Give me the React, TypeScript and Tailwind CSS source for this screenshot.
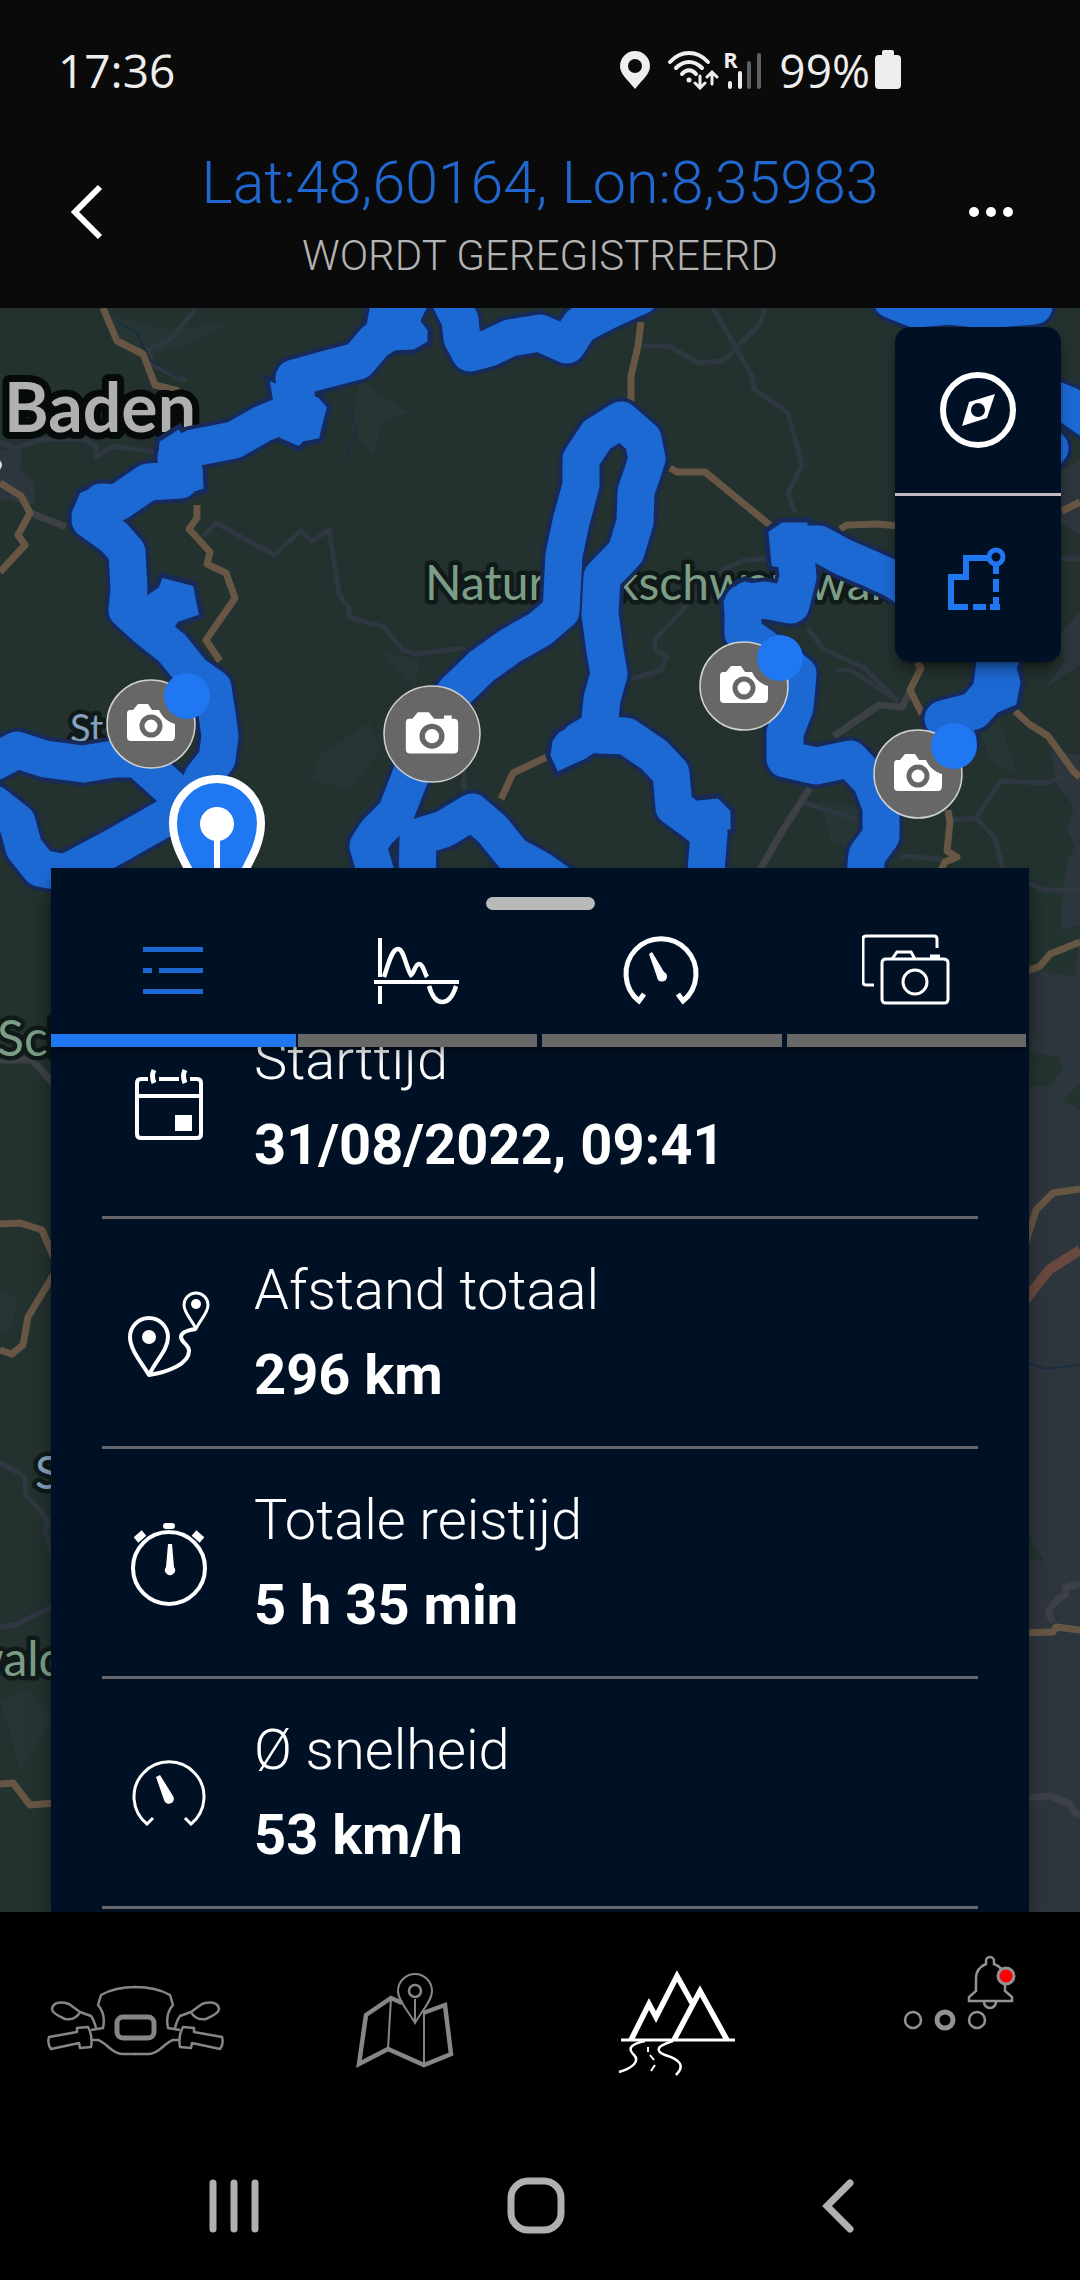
import type { ReactNode } from "react";

const trackLines = [
  "M410 300L396 328L375 341L358 361L331 368L294 378L298 409L262 424L234 440L193 448L176 457L180 480L148 482L117 503L102 502L90 520L114 537L127 552L129 589L127 610L148 629L172 648L193 674L213 688L217 714L220 736L217 759L203 777L193 799L165 818L114 847L65 873L40 868L24 848L17 822L-6 804",
  "M-6 762L17 750L45 759L83 764L114 759L138 759L158 777L179 796",
  "M450 300L460 320L462 338L470 353L489 348L510 338L540 333L567 345L580 325L605 312L640 296",
  "M382 890L375 870L368 846L377 832L396 813L410 777L424 740L455 692L482 666L510 646L540 629L561 611L562 592L564 555L571 522L581 485L581 459L597 435L621 420L643 439L647 459L636 492L635 522L626 552L602 577L600 614L605 651L609 674L602 699L599 729L580 740",
  "M599 735L626 736L654 755L671 773L674 807L692 820L709 833L705 885",
  "M417 885L418 837L444 829L472 812L492 829L513 855L540 870L560 884",
  "M930 604L895 580L871 569L843 557L819 544L795 544L798 577L791 605L764 600L743 603L743 633L774 655L798 674L795 707L785 733L785 759L816 766L850 759L871 781L881 807L881 836L867 855L864 885",
  "M998 640L991 692L974 711L943 719L958 740",
  "M892 300L915 309L950 306L985 310L1034 306",
  "M1056 400L1068 405L1090 420M1050 448L1048 450",
];

const trackPatches = [
  "M273 385L317 400L324 408L317 436L302 439L298 443L282 436Z",
  "M164 581L191 588L196 613L176 620L168 634L140 618L148 598L161 589Z",
  "M374 300L422 300L418 322L425 331L425 340L413 347L389 348L367 335Z",
  "M717 801L728 812L728 827L700 830L690 804Z",
  "M771 533L783 525L805 525L806 570L774 564Z",
  "M740 586L745 584L780 592L784 574L795 610L728 620L726 602Z",
  "M978 652L1020 655L1014 668L1018 682L1014 703L985 715Z",
  "M588 720L560 735L555 742L553 755L559 768L585 756Z",
  "M162 443L178 433L200 468L201 487L176 494L158 482Z",
  "M74 514L82 495L100 487L114 500L96 530L78 526Z",
];

const mainRoads = [
  "M103 308L117 341L143 354L155 385L179 391",
  "M0 483L21 496L30 513L18 535L25 545L0 572",
  "M197 505L197 518L189 529L210 552L207 564L226 573L235 598L206 640L220 661",
  "M547 757L513 773L501 799",
  "M641 322L638 346L631 376L631 404",
  "M670 468L677 472L705 472L771 526",
  "M840 529L847 525L878 524L898 526",
  "M917 662L921 668L910 690L922 714",
  "M1015 711L1029 724L1048 736L1074 772L1080 777",
  "M948 810L950 822L947 851L957 857L945 862L941 870",
  "M1062 511L1080 502",
  "M1020 974L1040 966L1050 954L1080 942",
  "M1026 1242L1036 1210L1053 1193L1080 1189",
  "M1020 1633L1053 1632L1056 1627L1080 1630",
  "M0 1224L20 1223L42 1230L54 1258M54 1274L28 1317L23 1345L12 1354L0 1350",
  "M0 1784L13 1783L30 1805L55 1803",
];

const smallRoads = [
  "M196 308L170 340L148 350L153 365L186 381",
  "M203 537L216 523L274 555L301 531L312 541L329 530L339 594L350 609L348 617L384 627L403 650L415 654L465 648",
  "M0 442L14 448L45 439L83 439L96 446L96 457L114 446L155 452",
  "M713 308L736 348L752 376L754 389L788 413L802 465L788 493L795 513",
  "M643 346L669 346L698 363L723 361L760 324L765 308",
  "M766 559L745 560L726 568L685 607L655 640L655 650L667 656L661 670L628 680",
  "M807 627L822 648L864 668L898 701M836 670L850 670L898 701",
  "M805 803L857 820",
  "M953 820L976 818L1001 781L1048 783L1080 770M976 818L995 838L1003 868",
  "M900 856L943 859",
  "M1062 559L1080 559",
  "M464 750L464 790",
  "M0 1462L25 1477L26 1495L48 1520L45 1533L55 1560",
  "M0 1627L15 1625L55 1605",
  "M1020 880L1045 890L1080 890",
];

const wideGreyRoads = [
  "M31 513L66 527",
  "M834 736L879 705L902 707L910 692",
  "M810 788L781 833L760 870",
  "M0 1060L32 1060L54 1084",
  "M1080 1584L1065 1588L1066 1594L1057 1600L1048 1612L1053 1622",
  "M1020 1798L1050 1796L1070 1804L1075 1813L1080 1815",
];

const builtUp = [
  "M1080 460L1062 470L1055 520L1080 535Z",
  "M1080 611L1057 637L1065 661L1045 688L1080 665Z",
  "M1080 755L1050 751L1057 785L1074 807L1067 829L1075 847L1062 870L1020 890L1020 1912L1080 1912Z",
  "M0 450L22 448L20 470L34 482L34 505L0 500Z",
];

const forest = [
  "M1020 880L1040 866L1068 862L1061 905L1061 930L1080 925L1075 978L1045 970L1020 960Z",
  "M1020 1050L1060 1057L1062 1070L1050 1086L1020 1086Z",
  "M1062 1100L1080 1084L1080 1110Z",
  "M1020 1520L1035 1545L1045 1562L1020 1555Z",
];

const hills = [
  "M110 315L170 330L230 322L190 345L130 360Z",
  "M360 380L410 413L384 420L372 455L350 430Z",
  "M383 652L420 660L415 690L395 670Z",
  "M320 755L370 722L380 750L350 790L312 780Z",
  "M820 800L870 810L850 850L830 840Z",
  "M920 590L890 600L860 590L900 570Z",
  "M970 700L1000 720L1020 780L990 760Z",
  "M0 1290L18 1300L12 1330L0 1332Z",
  "M0 1700L30 1690L50 1720L20 1770Z",
];

type MarkerProps = { x: number; y: number; large?: boolean };

function PhotoMarker({ x, y, large = false }: MarkerProps) {
  return (
    <g transform={`translate(${x} ${y})`}>
      <circle r={large ? 48 : 44} fill="#676767" stroke="#d0d0d0" strokeWidth="1.5" />
      <g transform={large ? "scale(1.09)" : undefined}>
        <path
          d={
            large
              ? "M-21 -14H-18L-13 -20H-3L2 -14H11V-17H18V-14H20Q24 -14 24 -10V14Q24 18 20 18H-20Q-24 18 -24 14V-10Q-24 -14 -21 -14Z"
              : "M-21 -14H-18L-13 -20H-3L1 -14H8C11 -7 17 -2 24 0V12Q24 17 20 17H-20Q-24 17 -24 13V-10Q-24 -14 -21 -14Z"
          }
          fill="#fff"
        />
        <circle cy="2" r="9" fill="#fff" stroke="#676767" strokeWidth="5" />
      </g>
      {!large && <circle cx="36" cy="-28" r="23" fill="#1f78f2" />}
    </g>
  );
}

function MapCanvas() {
  return (
    <svg
      className="absolute inset-0 h-full w-full"
      viewBox="0 308 1080 1604"
      preserveAspectRatio="xMidYMin slice"
      role="img"
      aria-label="Kaart met opgenomen route"
    >
      <rect y="308" width="1080" height="1604" fill="#23312f" />
      <g fill="#263634">{hills.map((d) => <path key={d} d={d} />)}</g>
      <g fill="#2e363d">{builtUp.map((d) => <path key={d} d={d} />)}</g>
      <g fill="#233330">{forest.map((d) => <path key={d} d={d} />)}</g>
      <g fill="none" strokeLinejoin="round">
        <g stroke="#2f3740" strokeWidth="5">{smallRoads.map((d) => <path key={d} d={d} />)}</g>
        <g stroke="#3d4046" strokeWidth="7">{wideGreyRoads.map((d) => <path key={d} d={d} />)}</g>
        <path d="M115 320L136 332L150 360L180 378M343 395L357 430L345 460M1020 1360L1045 1369L1080 1365" stroke="#1d2d42" strokeWidth="2" />
        <g stroke="#665643" strokeWidth="7">{mainRoads.map((d) => <path key={d} d={d} />)}</g>
        <path d="M1022 1304L1050 1269L1080 1250" stroke="#69493f" strokeWidth="10" />
      </g>
      <g
        fontFamily='Lato, "Noto Sans", sans-serif'
        paintOrder="stroke"
        strokeLinejoin="round"
        stroke="#101a19"
        strokeWidth="9"
      >
        <text x="4" y="432" fontSize="68" fontWeight="700" fill="#b0b0b0" stroke="#060a0a" strokeWidth="14">Baden</text>
        <text x="425" y="600" fontSize="48" fill="#7b9d86">Naturparkschwarzwald</text>
        <text x="70" y="742" fontSize="38" fill="#86a0bd">St</text>
        <text x="-3" y="1056" fontSize="50" fill="#7b9d86">Sch</text>
        <text x="35" y="1489" fontSize="46" fill="#86a0bd">S</text>
        <text x="-34" y="1676" fontSize="48" fill="#7b9d86">wald</text>
      </g>
      <circle cx="-4" cy="465" r="6" fill="#ddd" />
      <g strokeLinejoin="round" fill="#172a5c" stroke="#172a5c">
        {trackLines.map((d) => <path key={d} d={d} fill="none" strokeWidth="45" strokeLinecap="round" />)}
        {trackPatches.map((d) => <path key={d} d={d} strokeWidth="15" strokeLinejoin="miter" />)}
      </g>
      <g strokeLinejoin="round" fill="#1c69d4" stroke="#1c69d4">
        {trackLines.map((d) => <path key={d} d={d} fill="none" strokeWidth="37" strokeLinecap="round" />)}
        {trackPatches.map((d) => <path key={d} d={d} strokeWidth="5" strokeLinejoin="miter" />)}
      </g>
      <PhotoMarker x={151} y={724} />
      <PhotoMarker x={432} y={734} large />
      <PhotoMarker x={744} y={686} />
      <PhotoMarker x={918} y={774} />
      <path d="M217 779A44 44 0 0 1 261 823C261 850 245 866 217 925C189 866 173 850 173 823A44 44 0 0 1 217 779Z" fill="#1f78f2" stroke="#fff" strokeWidth="8" />
      <circle cx="217" cy="824" r="17" fill="#fff" />
      <path d="M217 824V920" stroke="#fff" strokeWidth="6" />
    </svg>
  );
}

function StatusBar() {
  return (
    <div className="flex h-[116px] items-center justify-between pt-6 pr-[178px] pl-[58px] font-['Open_Sans',sans-serif] text-[#eeeeee]">
      <span className="text-[46px] leading-[56px]">17:36</span>
      <div className="flex items-center">
        <svg width="32" height="40" viewBox="0 0 32 40" fill="currentColor" aria-hidden="true">
          <path fillRule="evenodd" d="M16 1A15 15 0 0 1 31 16C31 24 24 29 16 39C8 29 1 24 1 16A15 15 0 0 1 16 1ZM16 9A7 7 0 1 0 16 23A7 7 0 1 0 16 9Z" />
        </svg>
        <svg className="ml-4" width="52" height="40" viewBox="0 0 52 40" fill="none" stroke="currentColor" strokeWidth="4" strokeLinecap="round" aria-hidden="true">
          <path d="M3 12C14 0 30 0 41 12M9 18C17 10 27 10 35 18M15 24C19 19 25 19 29 24" />
          <circle cx="22" cy="30" r="2.5" fill="currentColor" stroke="none" />
          <path strokeWidth="3" d="M33 26V37M28 33L33 38L38 33M45 34V23M40 27L45 22L50 27" />
        </svg>
        <div className="relative ml-1 h-10 w-10">
          <span className="absolute top-0 left-0 text-[22px] leading-[18px] font-bold">R</span>
          <svg width="40" height="40" viewBox="0 0 40 40" fill="none" stroke="currentColor" strokeWidth="4" strokeLinecap="round" aria-hidden="true">
            <path d="M7 33V37M17 23V37" />
            <path stroke="#606060" d="M26 13V37M36 5V37" />
          </svg>
        </div>
        <span className="ml-4 text-[46px] leading-[56px]">99%</span>
        <svg className="ml-1" width="28" height="40" viewBox="0 0 28 40" fill="currentColor" aria-hidden="true">
          <path d="M8 2Q8 0 10 0H18Q20 0 20 2V5H23Q27 5 27 9V35Q27 39 23 39H5Q1 39 1 35V9Q1 5 5 5H8Z" />
        </svg>
      </div>
    </div>
  );
}

function TitleBar() {
  return (
    <header className="flex h-[192px] items-center justify-between px-9">
      <button type="button" aria-label="Terug" className="flex h-[102px] w-[102px] items-center justify-center">
        <svg width="40" height="60" viewBox="0 0 40 60" fill="none" stroke="#fff" strokeWidth="6" aria-hidden="true">
          <path d="M33 5L8 30L33 55" />
        </svg>
      </button>
      <div className="flex flex-col items-center gap-[10px]">
        <h1 className="text-[59px] leading-[78px] font-light text-[#2067cf]">Lat:48,60164, Lon:8,35983</h1>
        <p className="text-[42px] leading-[48px] font-light text-[#b4b4b4]">WORDT GEREGISTREERD</p>
      </div>
      <button type="button" aria-label="Meer opties" className="flex h-[102px] w-[102px] items-center justify-center">
        <svg width="50" height="20" viewBox="0 0 50 20" fill="#fff" aria-hidden="true">
          <circle cx="6" cy="10" r="5" />
          <circle cx="23" cy="10" r="5" />
          <circle cx="40" cy="10" r="5" />
        </svg>
      </button>
    </header>
  );
}

function MapControls() {
  return (
    <div className="absolute top-[19px] right-[19px] flex w-[166px] flex-col overflow-hidden rounded-[15px] bg-[#001126] shadow-lg shadow-black/40">
      <button type="button" aria-label="Kompas" className="flex h-[166px] items-center justify-center">
        <svg width="80" height="80" viewBox="0 0 80 80" aria-hidden="true">
          <circle cx="40" cy="40" r="35" fill="none" stroke="#fff" strokeWidth="6" />
          <path fillRule="evenodd" fill="#fff" d="M57 24L31 32L24 56L49 48ZM40 33A7 7 0 1 1 40 47A7 7 0 1 1 40 33Z" />
        </svg>
      </button>
      <button type="button" aria-label="Route tonen" className="flex h-[169px] items-center justify-center border-t-3 border-[#bebbc3]">
        <svg width="80" height="80" viewBox="0 0 80 80" fill="none" stroke="#1f78f2" strokeWidth="6" aria-hidden="true">
          <path d="M51 19H28V38H13V68H30M35 68H48M52 68H62M58 71V58M58 53V40M58 35V25" />
          <circle cx="58" cy="18" r="7" strokeWidth="5" />
        </svg>
      </button>
    </div>
  );
}

const tabs: { label: string; icon: ReactNode }[] = [
  {
    label: "Overzicht",
    icon: <path fill="#1c69d4" d="M15 17H75V22H15ZM15 38H24V43H15ZM31 38H75V43H31ZM15 59H75V64H15Z" />,
  },
  {
    label: "Hoogteprofiel",
    icon: (
      <g fill="none" stroke="#fff" strokeWidth="4.5">
        <path strokeWidth="4" d="M7 8V47M7 56V74M1 52H86" />
        <path d="M11 47C16 32 19 19 25 19C31 19 33 38 38 45C41 44 42 34 46 34C50 34 51 42 54 47M56 56C59 66 63 72 69 72C76 72 80 66 83 56" />
      </g>
    ),
  },
  {
    label: "Snelheid",
    icon: (
      <g fill="none" stroke="#fff" strokeWidth="5">
        <path d="M27 64L22 71A35 35 0 1 1 66 71L61 64" />
        <path fill="#fff" stroke="none" d="M32 24L35 22L47 42A5 5 0 1 1 40 47Z" />
      </g>
    ),
  },
  {
    label: "Foto's",
    icon: (
      <g fill="none" stroke="#fff" strokeWidth="3">
        <path d="M75 18V9Q75 6 72 6H4Q1 6 1 9V52Q1 55 4 55H12" />
        <path d="M24 29H81Q86 29 86 33V69Q86 73 82 73H24Q20 73 20 69V33Q20 29 24 29ZM30 29L35 22H49L53 29M68 26H78" />
        <circle cx="53" cy="52" r="12" />
      </g>
    ),
  },
];

const stats: { label: string; value: string; icon: ReactNode }[] = [
  {
    label: "Starttijd",
    value: "31/08/2022, 09:41",
    icon: (
      <g fill="none" stroke="#fff" strokeWidth="4">
        <path d="M24 21H17Q13 21 13 25V76Q13 80 17 80H73Q77 80 77 76V25Q77 21 73 21H66M35 21H55M13 38H77" />
        <path strokeWidth="5" d="M30 12Q27 18 30 25M61 12Q58 18 61 25" />
        <path fill="#fff" stroke="none" d="M51 57H68V73H51Z" />
      </g>
    ),
  },
  {
    label: "Afstand totaal",
    value: "296 km",
    icon: (
      <g fill="none" stroke="#fff" strokeWidth="4" strokeLinejoin="round">
        <path d="M25 87C18 75 6 62 6 49A19 19 0 0 1 44 49C44 62 32 72 25 87C44 84 65 76 65 63C65 56 57 55 57 49C57 44 64 42 72 41" />
        <path strokeWidth="3" d="M72 41C68 32 60 25 60 17A12 12 0 0 1 84 17C84 25 76 32 72 41Z" />
        <circle cx="25" cy="49" r="7" fill="#fff" stroke="none" />
        <circle cx="72" cy="16" r="5" fill="#fff" stroke="none" />
      </g>
    ),
  },
  {
    label: "Totale reistijd",
    value: "5 h 35 min",
    icon: (
      <g fill="none" stroke="#fff" strokeWidth="4">
        <circle cx="45" cy="50" r="36" />
        <path strokeWidth="6" strokeLinecap="round" d="M42 8H48" />
        <path strokeWidth="7" d="M12 22L20 15M70 15L78 22" />
        <path fill="#fff" stroke="none" d="M44 26H48L50 49A5 5 0 1 1 42 49Z" />
      </g>
    ),
  },
  {
    label: "Ø snelheid",
    value: "53 km/h",
    icon: (
      <g fill="none" stroke="#fff" strokeWidth="3">
        <path d="M29 70L23 76A35 35 0 1 1 67 76L61 70" />
        <path fill="#fff" stroke="none" d="M32 29L36 27L49 48A5 5 0 1 1 40 52Z" />
      </g>
    ),
  },
];

function DetailsPanel() {
  return (
    <section className="relative mx-[51px] mt-[560px] bg-[#001126] shadow-xl shadow-black/40">
      <div className="relative z-10 bg-[#001126] pt-[29px] shadow-lg shadow-black/30">
        <div className="mx-auto h-[13px] w-[109px] rounded-full bg-[#b9b9b9]" />
        <div role="tablist" className="grid grid-cols-4">
          {tabs.map((tab, index) => (
            <button key={tab.label} type="button" role="tab" aria-label={tab.label} aria-selected={index === 0} className="flex flex-col items-center gap-6 pt-5">
              <svg width="90" height="80" viewBox="0 0 90 80" aria-hidden="true">{tab.icon}</svg>
              <span className={index === 0 ? "h-[13px] self-stretch bg-[#1f78f2]" : "mr-[3px] ml-[2px] h-[13px] self-stretch bg-[#676767]"} />
            </button>
          ))}
        </div>
      </div>
      <div className="overflow-hidden px-[51px] pb-[3px]">
        <dl className="-mt-[58px]">
          {stats.map((stat) => (
            <div key={stat.label} className="flex items-center gap-10 border-b-3 border-[#65676c] py-[38px] pl-[22px]">
              <svg className="shrink-0" width="90" height="90" viewBox="0 0 90 90" aria-hidden="true">{stat.icon}</svg>
              <div className="flex flex-col gap-[19px] text-[56px] leading-[66px] text-white">
                <dt className="font-light">{stat.label}</dt>
                <dd className="font-bold">{stat.value}</dd>
              </div>
            </div>
          ))}
        </dl>
      </div>
    </section>
  );
}

const handlebarSide = (
  <>
    <path d="M32 76L43 75Q48 84 46 95L35 96L34 91L6 97Q2 92 4 85L32 80Z" />
    <path d="M7 57C8 49 18 50 24 52L35 60C32 66 26 68 20 67C13 64 7 61 7 57ZM35 60L46 64Q49 68 51 76" />
    <path d="M46 78L58 76Q61 62 53 53L56 43Q70 35 91 35M46 88H53C62 91 67 102 77 102H91" />
  </>
);

const destinations: { label: string; icon: ReactNode }[] = [
  {
    label: "Motor",
    icon: (
      <g fill="none" stroke="#868686" strokeWidth="2.5" strokeLinejoin="round">
        {handlebarSide}
        <g transform="translate(181 0) scale(-1 1)">{handlebarSide}</g>
        <rect x="72" y="65" width="37" height="21" rx="6" strokeWidth="5" />
      </g>
    ),
  },
  {
    label: "Navigatie",
    icon: (
      <g fill="none" stroke="#868686" strokeWidth="4.5">
        <path d="M87 51L76 46L51 63L44 112L73 97L109 113L136 102L130 53L108 61" />
        <path strokeWidth="2" d="M76 46L73 97M109 61V113M100 47V70" />
        <path strokeWidth="2" d="M100 71C94 60 83 49 83 39A17 17 0 0 1 117 39C117 49 106 60 100 71Z" />
        <circle cx="100" cy="39" r="6" strokeWidth="2.5" />
      </g>
    ),
  },
  {
    label: "Routes",
    icon: (
      <g fill="none" stroke="#fff" strokeWidth="5.5">
        <path d="M46 88L64 52L71 65L92 24L107 51M89 88L115 39L142 88" />
        <path strokeWidth="3" d="M36 88H150" />
        <path strokeWidth="2.5" d="M60 89C42 93 44 98 49 103C55 109 48 116 34 120M88 89C71 94 70 99 80 103C96 108 100 114 91 123" />
        <path strokeWidth="2" d="M63 95V100M65 103L69 108M70 113L66 119" />
      </g>
    ),
  },
  {
    label: "Meer",
    icon: (
      <g fill="none" stroke="#929292" strokeWidth="2.5">
        <circle cx="58" cy="68" r="8" />
        <circle cx="90" cy="68" r="8" strokeWidth="5" />
        <circle cx="122" cy="68" r="8" />
        <path d="M131 12V9A4 4 0 0 1 139 9V12C147 15 150 20 150 26V39L157 45V49H114V45L121 39V26C121 20 124 15 131 12ZM129 50A6 6 0 0 0 141 50" />
        <circle cx="151" cy="24" r="8" fill="#f00" strokeWidth="3" />
      </g>
    ),
  },
];

function BottomNavigation() {
  return (
    <nav className="grid h-[220px] grid-cols-4 items-center bg-black">
      {destinations.map((item) => (
        <a key={item.label} href="#" aria-label={item.label} className="flex justify-center">
          <svg width="180" height="140" viewBox="0 0 180 140" aria-hidden="true">{item.icon}</svg>
        </a>
      ))}
    </nav>
  );
}

function SystemNavigation() {
  return (
    <div className="grid h-[148px] grid-cols-3 items-center bg-black pr-[93px] pl-[84px]">
      <button type="button" aria-label="Recente apps" className="flex justify-center">
        <svg width="60" height="60" viewBox="0 0 60 60" stroke="#b0b0b0" strokeWidth="7" strokeLinecap="round" aria-hidden="true">
          <path d="M8 7V53M29 7V53M50 7V53" />
        </svg>
      </button>
      <button type="button" aria-label="Startscherm" className="flex justify-center">
        <svg width="60" height="60" viewBox="0 0 60 60" fill="none" stroke="#b0b0b0" strokeWidth="7" aria-hidden="true">
          <rect x="5" y="5" width="50" height="49" rx="17" />
        </svg>
      </button>
      <button type="button" aria-label="Vorige" className="flex justify-center">
        <svg width="60" height="60" viewBox="0 0 60 60" fill="none" stroke="#b0b0b0" strokeWidth="7" strokeLinecap="round" aria-hidden="true">
          <path d="M43 7L20 30L43 53" />
        </svg>
      </button>
    </div>
  );
}

export default function App() {
  return (
    <div className="flex min-h-screen flex-col bg-[#0a0a0a] font-[Roboto,sans-serif]">
      <StatusBar />
      <TitleBar />
      <main className="relative grow overflow-hidden bg-[#23312f]">
        <MapCanvas />
        <MapControls />
        <DetailsPanel />
      </main>
      <BottomNavigation />
      <SystemNavigation />
    </div>
  );
}
